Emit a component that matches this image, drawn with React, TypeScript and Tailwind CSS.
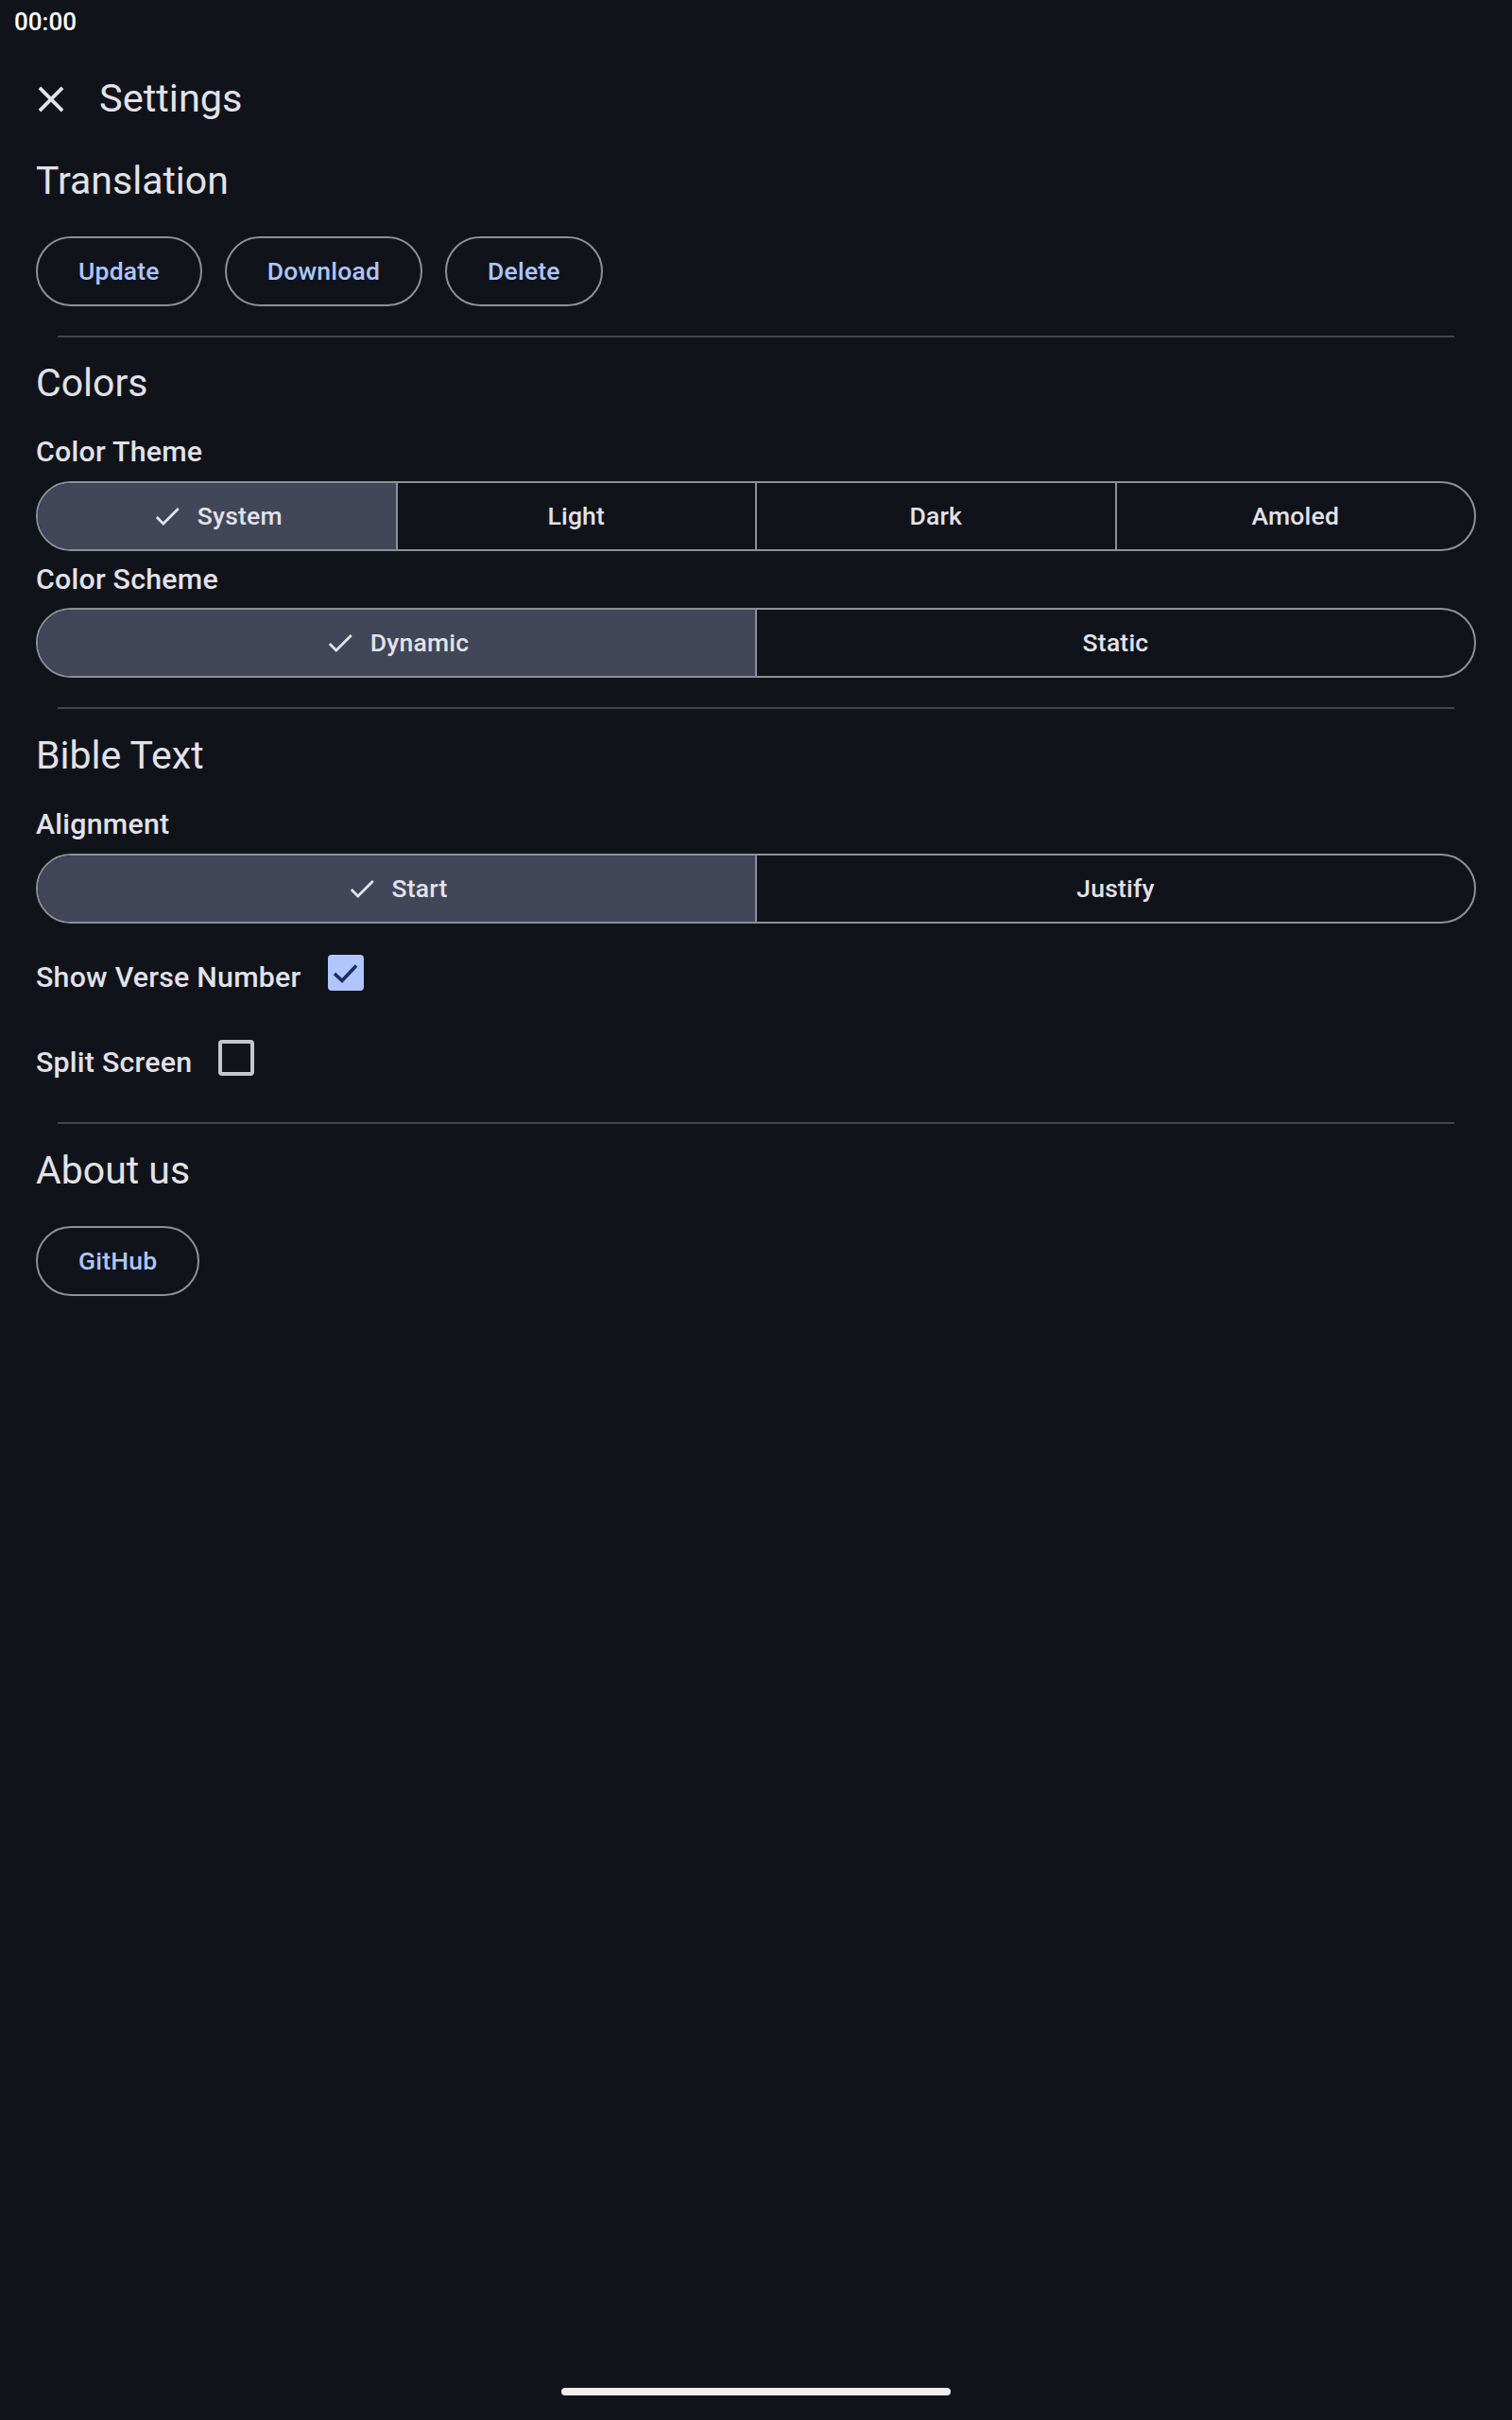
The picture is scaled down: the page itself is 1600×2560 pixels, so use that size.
import { useState } from 'react'

const font = { fontFamily: 'Roboto, "Noto Sans", sans-serif' }

function CheckIcon({ className = '' }: { className?: string }) {
  return (
    <svg viewBox="0 0 24 24" className={className} fill="currentColor">
      <path d="M9 16.17L4.83 12l-1.42 1.41L9 19 21 7l-1.41-1.41z" />
    </svg>
  )
}

function CloseIcon() {
  return (
    <svg viewBox="0 0 24 24" className="w-[46px] h-[46px] mt-[2px] text-[#e2e2e9]" fill="currentColor">
      <path d="M19 6.41L17.59 5 12 10.59 6.41 5 5 6.41 10.59 12 5 17.59 6.41 19 12 13.41 17.59 19 19 17.59 13.41 12z" />
    </svg>
  )
}

function OutlinedButton({ label }: { label: string }) {
  return (
    <button className="h-[74px] px-[43px] rounded-full border-2 border-[#8e9099] text-[26.5px] font-medium tracking-[0.2px] text-[#adc6ff] leading-none">
      {label}
    </button>
  )
}

function Segmented({ options, value, onChange }: { options: string[]; value: string; onChange: (v: string) => void }) {
  return (
    <div className="flex h-[74px] rounded-full border-2 border-[#8e9099] overflow-hidden">
      {options.map((opt, i) => (
        <button
          key={opt}
          onClick={() => onChange(opt)}
          className={`flex-1 flex items-center justify-center gap-[15px] text-[26.5px] font-medium tracking-[0.2px] text-[#e2e2e9] ${
            i > 0 ? 'border-l-2 border-[#8e9099]' : ''
          } ${value === opt ? 'bg-[#414659]' : 'bg-transparent'}`}
        >
          {value === opt && <CheckIcon className="w-[34px] h-[34px]" />}
          <span>{opt}</span>
        </button>
      ))}
    </div>
  )
}

function Divider({ className = '' }: { className?: string }) {
  return <div className={`mx-[23px] h-[2px] bg-[#44464f] ${className}`} />
}

function Heading({ children, className = '' }: { children: string; className?: string }) {
  return <h2 className={`text-[41px] leading-[48px] text-[#e2e2e9] ${className}`}>{children}</h2>
}

function Label({ children, className = '' }: { children: string; className?: string }) {
  return (
    <p className={`text-[30.3px] leading-[40px] font-medium tracking-[0.25px] text-[#e2e2e9] ${className}`}>{children}</p>
  )
}

function CheckRow({ label, checked, onToggle }: { label: string; checked: boolean; onToggle: () => void }) {
  return (
    <div className="flex items-center h-[90px]">
      <span className="pt-[10px] text-[30.3px] leading-[40px] font-medium tracking-[0.25px] text-[#e2e2e9]">{label}</span>
      <button onClick={onToggle} className="ml-[28px] w-[38px] h-[38px] flex-shrink-0">
        {checked ? (
          <span className="flex w-full h-full items-center justify-center rounded-[4px] bg-[#b0c6ff]">
            <svg viewBox="0 0 38 38" className="w-[38px] h-[38px]">
              <polyline points="7,20 15,27.5 30,11.5" fill="none" stroke="#1b2e5e" strokeWidth="3.6" />
            </svg>
          </span>
        ) : (
          <span className="block w-full h-full rounded-[4px] border-4 border-[#c4c6d0]" />
        )}
      </button>
    </div>
  )
}

export default function App() {
  const [theme, setTheme] = useState('System')
  const [scheme, setScheme] = useState('Dynamic')
  const [align, setAlign] = useState('Start')
  const [verseNum, setVerseNum] = useState(true)
  const [split, setSplit] = useState(false)

  return (
    <div className="relative w-[1600px] h-[2560px] bg-[#11131a] overflow-hidden" style={font}>
      {/* Status bar */}
      <div className="h-[48px] pt-[3px] pl-[15px] text-[26px] leading-[40px] font-medium text-white">00:00</div>

      {/* Top app bar */}
      <div className="h-[112px] flex items-center pl-[31px]">
        <CloseIcon />
        <h1 className="ml-[28px] text-[41.5px] leading-[56px] text-[#e2e2e9]">Settings</h1>
      </div>

      <div className="px-[38px] flex flex-col">
        <Heading className="mt-[7px]">Translation</Heading>
        <div className="mt-[35px] flex gap-[24px]">
          <OutlinedButton label="Update" />
          <OutlinedButton label="Download" />
          <OutlinedButton label="Delete" />
        </div>

        <Divider className="mt-[31px]" />

        <Heading className="mt-[24px]">Colors</Heading>
        <Label className="mt-[29px]">Color Theme</Label>
        <div className="mt-[11px]">
          <Segmented options={['System', 'Light', 'Dark', 'Amoled']} value={theme} onChange={setTheme} />
        </div>
        <Label className="mt-[10px]">Color Scheme</Label>
        <div className="mt-[10px]">
          <Segmented options={['Dynamic', 'Static']} value={scheme} onChange={setScheme} />
        </div>

        <Divider className="mt-[31px]" />

        <Heading className="mt-[25px]">Bible Text</Heading>
        <Label className="mt-[29px]">Alignment</Label>
        <div className="mt-[11px]">
          <Segmented options={['Start', 'Justify']} value={align} onChange={setAlign} />
        </div>
        <div className="mt-[7px]">
          <CheckRow label="Show Verse Number" checked={verseNum} onToggle={() => setVerseNum(v => !v)} />
          <CheckRow label="Split Screen" checked={split} onToggle={() => setSplit(v => !v)} />
        </div>

        <Divider className="mt-[23px]" />

        <Heading className="mt-[25px]">About us</Heading>
        <div className="mt-[35px] flex">
          <OutlinedButton label="GitHub" />
        </div>
      </div>

      {/* Gesture bar */}
      <div className="absolute bottom-[26px] left-1/2 -translate-x-1/2 w-[412px] h-[8px] rounded-full bg-[#eeeeee]" />
    </div>
  )
}
